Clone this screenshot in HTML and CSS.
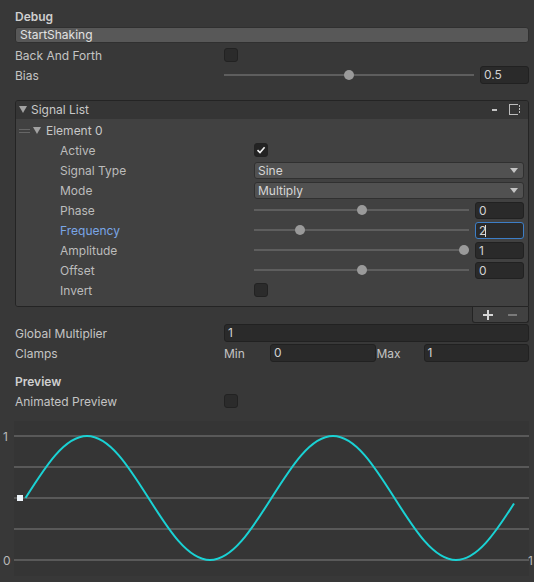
FILE: index.html
```html
<!DOCTYPE html>
<html>
<head>
<meta charset="utf-8">
<link rel="stylesheet" href="styles.css">
</head>
<body>
<div class="inspector">
  <div class="section-title">Debug</div>
  <div class="button">StartShaking</div>
  <div class="row"><span class="label">Back And Forth</span><span class="checkbox"></span></div>
  <div class="row"><span class="label">Bias</span>
    <div class="control">
      <div class="slider" style="--v:0.5"><div class="track"></div><div class="knob"></div></div>
      <div class="field num">0.5</div>
    </div>
  </div>

  <div class="list">
    <div class="list-box">
      <div class="list-header">
        <span class="fold"></span><span class="list-title">Signal List</span>
        <span class="dash"></span>
        <svg class="max-icon" width="11" height="11" viewBox="0 0 11 11"><path d="M0.5,0 V11 M0,0.5 H9 M0,10.5 H9" stroke="#bdbdbd" fill="none"/><path d="M10.5,1 V10" stroke="#bdbdbd" stroke-dasharray="2 1" fill="none"/></svg>
      </div>
      <div class="list-body">
        <div class="element-row"><span class="handle"></span><span class="fold"></span><span class="element-title">Element 0</span></div>
        <div class="row sub"><span class="label">Active</span><span class="checkbox checked"><svg width="12" height="12" viewBox="0 0 12 12"><path d="M2.5,6.2 L5,8.6 L9.6,3.2" stroke="#f2f2f2" stroke-width="1.6" fill="none"/></svg></span></div>
        <div class="row sub"><span class="label">Signal Type</span><div class="dropdown"><span>Sine</span><span class="arrow"></span></div></div>
        <div class="row sub"><span class="label">Mode</span><div class="dropdown"><span>Multiply</span><span class="arrow"></span></div></div>
        <div class="row sub"><span class="label">Phase</span>
          <div class="control"><div class="slider" style="--v:0.5"><div class="track"></div><div class="knob"></div></div><div class="field num small">0</div></div></div>
        <div class="row sub"><span class="label focus">Frequency</span>
          <div class="control"><div class="slider" style="--v:0.2"><div class="track"></div><div class="knob"></div></div><div class="field num small focused">2<span class="caret"></span></div></div></div>
        <div class="row sub"><span class="label">Amplitude</span>
          <div class="control"><div class="slider" style="--v:1"><div class="track"></div><div class="knob"></div></div><div class="field num small">1</div></div></div>
        <div class="row sub"><span class="label">Offset</span>
          <div class="control"><div class="slider" style="--v:0.5"><div class="track"></div><div class="knob"></div></div><div class="field num small">0</div></div></div>
        <div class="row sub"><span class="label">Invert</span><span class="checkbox"></span></div>
      </div>
    </div>
    <div class="list-footer">
      <svg width="10" height="10" viewBox="0 0 10 10"><path d="M5,0 V10 M0,5 H10" stroke="#d6d6d6" stroke-width="2"/></svg>
      <svg width="9" height="10" viewBox="0 0 9 10"><path d="M0,5 H9" stroke="#8a8a8a" stroke-width="1.6"/></svg>
    </div>
  </div>

  <div class="row gm"><span class="label">Global Multiplier</span><div class="field wide">1</div></div>
  <div class="row"><span class="label">Clamps</span>
    <div class="clamps">
      <span class="mini">Min</span><div class="field">0</div>
      <span class="mini">Max</span><div class="field">1</div>
    </div>
  </div>

  <div class="section-title preview">Preview</div>
  <div class="row"><span class="label">Animated Preview</span><span class="checkbox"></span></div>
</div>

<svg class="graph" width="534" height="172" viewBox="0 0 534 172">
  <rect x="14" y="10" width="515" height="155" fill="#353535"/>
  <g stroke="#595959" stroke-width="2">
    <path d="M14,25 H529 M14,56 H529 M14,87 H529 M14,118 H529 M14,149 H529"/>
  </g>
  <path d="M25.5,87 c20.06,-31.76 39.24,-62 61.5,-62 c22.26,0 41.44,30.24 61.5,62 c20.06,31.76 39.24,62 61.5,62 c22.26,0 41.44,-30.24 61.5,-62 c20.06,-31.76 39.24,-62 61.5,-62 c22.26,0 41.44,30.24 61.5,62 c20.06,31.76 39.24,62 61.5,62 c20.97,0 39.21,-26.84 58.02,-56.49" fill="none" stroke="#1ad2d4" stroke-width="2"/>
  <rect x="17" y="84" width="6" height="6" fill="#eef4fa"/>
  <g class="axis">
    <text x="3" y="29.5">1</text>
    <text x="3" y="154">0</text>
    <text x="528" y="154">1</text>
  </g>
</svg>
</body>
</html>
```

FILE: styles.css
```css
html, body {
  margin: 0;
  padding: 0;
}

body {
  background: #383838;
  font-family: Inter, "Noto Sans", "Liberation Sans", sans-serif;
  font-size: 12px;
  color: #c4c4c4;
  width: 534px;
  height: 582px;
  overflow: hidden;
}

.inspector {
  padding: 8px 5px 0 15px;
}

.section-title {
  height: 18px;
  line-height: 18px;
  font-weight: 600;
  color: #cfcfcf;
  margin-bottom: 1px;
}

.section-title.preview {
  margin-top: 10px;
  margin-bottom: 0;
}

.button {
  height: 16px;
  box-sizing: border-box;
  background: #585858;
  border: 1px solid #303030;
  border-radius: 3px;
  padding-left: 4px;
  line-height: 14px;
  color: #e2e2e2;
  margin-bottom: 2px;
}

.row {
  display: flex;
  align-items: center;
  height: 20px;
}

.label {
  width: 209px;
  flex: none;
  white-space: nowrap;
}

.label.focus {
  color: #7aa6e6;
}

.control {
  flex: 1;
  display: flex;
  align-items: center;
  gap: 6px;
}

.checkbox {
  width: 14px;
  height: 14px;
  box-sizing: border-box;
  background: #2b2b2b;
  border: 1px solid #222222;
  border-radius: 3px;
  display: flex;
  align-items: center;
  justify-content: center;
}

.checkbox.checked {
  background: #232323;
}

.field {
  height: 18px;
  box-sizing: border-box;
  background: #2a2a2a;
  border: 1px solid #212121;
  border-radius: 3px;
  padding-left: 3px;
  line-height: 16px;
  color: #d2d2d2;
  white-space: nowrap;
}

.num {
  width: 49px;
  flex: none;
}

.field.small {
  height: 17px;
  line-height: 15px;
}

.field.focused {
  border-color: #3d7ec6;
}

.caret {
  display: inline-block;
  width: 1px;
  height: 12px;
  background: #dcdcdc;
  vertical-align: -2px;
  margin-left: -1px;
}

.field.wide {
  flex: 1;
}

.slider {
  flex: 1;
  position: relative;
  height: 20px;
}

.track {
  position: absolute;
  left: 0;
  right: 0;
  top: 9px;
  height: 2px;
  background: #5e5e5e;
}

.knob {
  position: absolute;
  top: 5px;
  width: 10px;
  height: 10px;
  border-radius: 50%;
  background: #9a9a9a;
  left: calc((100% - 10px) * var(--v));
}

/* list */
.list {
  margin-top: 15px;
  display: flex;
  flex-direction: column;
}

.list-box {
  border: 1px solid #242424;
  border-radius: 3px 3px 0 3px;
  overflow: hidden;
}

.list-header {
  height: 18px;
  background: #353535;
  display: flex;
  align-items: center;
  padding: 0 8px 1px 3px;
  box-sizing: border-box;
}

.fold {
  width: 0;
  height: 0;
  border-left: 4px solid transparent;
  border-right: 4px solid transparent;
  border-top: 7px solid #a2a2a2;
  flex: none;
}

.list-title {
  margin-left: 4px;
  color: #c8c8c8;
}

.dash {
  margin-left: auto;
  margin-right: 12px;
  width: 5px;
  height: 2px;
  background: #c4c4c4;
}

.max-icon {
  display: block;
}

.list-body {
  background: #414141;
  padding: 1px 4px 6px 0;
}

.element-row {
  display: flex;
  align-items: center;
  height: 20px;
  padding-left: 3px;
}

.handle {
  width: 11px;
  height: 2px;
  border-top: 1px solid #666666;
  border-bottom: 1px solid #666666;
  margin-right: 3px;
  margin-top: 1px;
}

.element-title {
  margin-left: 5px;
  color: #c8c8c8;
}

.row.sub {
  padding-left: 44px;
}

.row.sub .label {
  width: 194px;
  color: #bcbcbc;
}

.row.sub .label.focus {
  color: #7aa6e6;
}

.dropdown {
  flex: 1;
  height: 17px;
  box-sizing: border-box;
  background: #515151;
  border: 1px solid #303030;
  border-radius: 3px;
  display: flex;
  align-items: center;
  justify-content: space-between;
  padding-left: 3px;
  color: #d6d6d6;
}

.arrow {
  width: 0;
  height: 0;
  border-left: 4px solid transparent;
  border-right: 4px solid transparent;
  border-top: 5px solid #c4c4c4;
  margin-right: 5px;
}

.list-footer {
  align-self: flex-end;
  width: 57px;
  height: 16px;
  box-sizing: border-box;
  background: #414141;
  border: 1px solid #242424;
  border-top: none;
  border-radius: 0 0 3px 3px;
  display: flex;
  align-items: center;
  padding-left: 10px;
  gap: 15px;
}

.list-footer svg {
  display: block;
}

.clamps {
  flex: 1;
  display: grid;
  grid-template-columns: 46px 1fr 48px 1fr;
  align-items: center;
}

.clamps .mini + .field + .mini {
  padding-left: 1px;
}

.graph {
  display: block;
}

.axis text {
  font-family: Inter, "Noto Sans", sans-serif;
  font-size: 12px;
  fill: #b8b8b8;
}
```
